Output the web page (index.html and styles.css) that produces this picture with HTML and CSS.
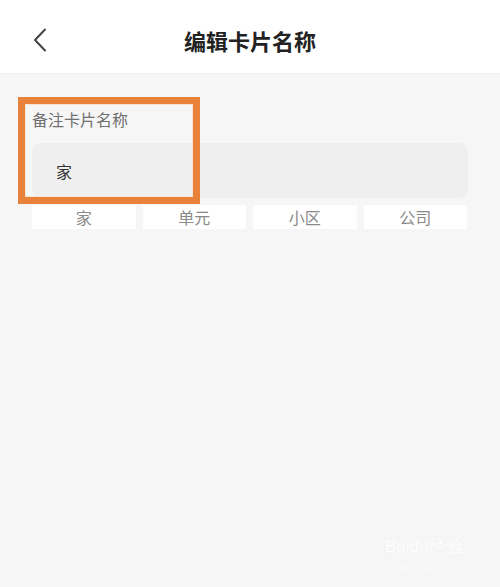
FILE: index.html
```html
<!DOCTYPE html>
<html lang="zh">
<head>
<meta charset="utf-8">
<title>编辑卡片名称</title>
<link rel="stylesheet" href="styles.css">
</head>
<body>
<header class="topbar">
  <span class="back">
    <svg width="14" height="24" viewBox="0 0 14 24"><path d="M12 1.5 L2 12 L12 22.5" fill="none" stroke="#444" stroke-width="2" stroke-linecap="round" stroke-linejoin="round"/></svg>
  </span>
  <h1 class="title">编辑卡片名称</h1>
  <span></span>
</header>
<main class="content">
  <div class="label">备注卡片名称</div>
  <div class="input">家</div>
  <div class="chips">
    <div class="chip">家</div>
    <div class="chip">单元</div>
    <div class="chip">小区</div>
    <div class="chip">公司</div>
  </div>
</main>
<div class="highlight"></div>
<div class="watermark">
  <div class="wm-main">Bai<span class="paw">du</span>经验</div>
  <div class="wm-sub">jingyan.baidu.com</div>
</div>
</body>
</html>
```
FILE: styles.css
```css
html, body {
  margin: 0;
  padding: 0;
}
body {
  width: 500px;
  height: 587px;
  background: #f6f6f6;
  font-family: "Noto Sans CJK SC", "Noto Sans", sans-serif;
  position: relative;
  overflow: hidden;
}
.topbar {
  height: 74px;
  background: #ffffff;
  display: grid;
  grid-template-columns: 1fr auto 1fr;
  align-items: center;
  border-bottom: 1px solid #efefef;
  box-sizing: border-box;
}
.back {
  padding-left: 33px;
  display: flex;
  align-items: center;
  padding-top: 6px;
}
.title {
  margin: 0;
  font-size: 22px;
  font-weight: 700;
  color: #222;
  line-height: 30px;
  padding-top: 6px;
}
.content {
  padding: 35px 32px 0 32px;
}
.label {
  font-size: 16px;
  line-height: 20px;
  color: #707070;
}
.input {
  margin-top: 14px;
  height: 55px;
  background: #efefef;
  border-radius: 9px;
  display: flex;
  align-items: center;
  padding-left: 24px;
  font-size: 16px;
  color: #333;
}
.chips {
  margin-top: 7px;
  display: grid;
  grid-template-columns: repeat(4, 1fr);
  gap: 7px;
  margin-right: 1px;
}
.chip {
  height: 24px;
  background: #ffffff;
  display: flex;
  align-items: center;
  justify-content: center;
  font-size: 16px;
  color: #8a8a8a;
}
.highlight {
  position: absolute;
  left: 18px;
  top: 97px;
  width: 182px;
  height: 107px;
  box-sizing: border-box;
  border: 7px solid #e8813a;
  box-shadow: inset 0 0 0 1px #fbe3d3;
}
.watermark {
  position: absolute;
  left: 385px;
  top: 537px;
  color: #ffffff;
  text-shadow: 0 0 1px #ebebeb;
}
.wm-main {
  font-family: "Liberation Sans", sans-serif;
  font-size: 17px;
  line-height: 20px;
}
.wm-sub {
  font-family: "Liberation Sans", sans-serif;
  font-size: 9px;
  line-height: 12px;
  margin-top: 4px;
}
```
